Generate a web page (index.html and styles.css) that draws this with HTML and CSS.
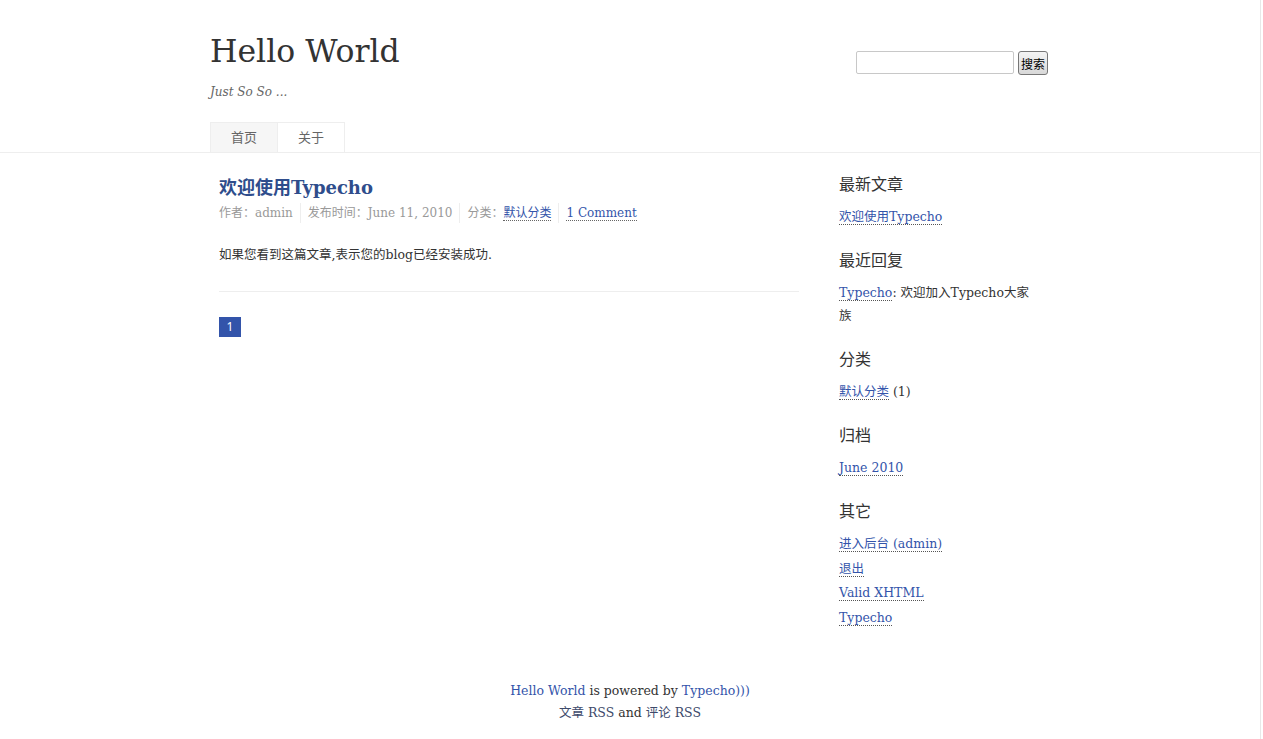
FILE: index.html
```html
<!DOCTYPE html>
<html lang="zh-CN">
<head>
    <meta charset="UTF-8">
    <title>Hello World</title>
    <link rel="stylesheet" href="styles.css">
</head>
<body>
<div class="sitio">
    <div class="cabecera">
        <div class="contenedor cabecera-fila">
            <div class="logo">
                <h1><a href="#">Hello World</a></h1>
                <p class="descripcion">Just So So ...</p>
            </div>
            <form class="buscar">
                <input type="text" class="buscar-texto">
                <button type="button" class="buscar-boton">搜索</button>
            </form>
        </div>
        <div class="contenedor">
            <ul class="menu">
                <li class="actual"><a href="#">首页</a></li>
                <li><a href="#">关于</a></li>
            </ul>
        </div>
    </div>

    <div class="contenedor cuerpo">
        <div class="contenido">
            <div class="entrada">
                <h2 class="entrada-titulo"><a href="#">欢迎使用Typecho</a></h2>
                <ul class="entrada-meta">
                    <li>作者：admin</li>
                    <li>发布时间：June 11, 2010</li>
                    <li>分类：<a href="#">默认分类</a></li>
                    <li><a href="#">1 Comment</a></li>
                </ul>
                <div class="entrada-texto">
                    <p>如果您看到这篇文章,表示您的blog已经安装成功.</p>
                </div>
            </div>
            <ol class="paginas">
                <li class="actual"><a href="#">1</a></li>
            </ol>
        </div>

        <div class="lateral">
            <div class="bloque">
                <h3>最新文章</h3>
                <ul>
                    <li><a href="#">欢迎使用Typecho</a></li>
                </ul>
            </div>
            <div class="bloque">
                <h3>最近回复</h3>
                <ul>
                    <li><a href="#">Typecho</a>: 欢迎加入Typecho大家族</li>
                </ul>
            </div>
            <div class="bloque">
                <h3>分类</h3>
                <ul>
                    <li><a href="#">默认分类</a> (1)</li>
                </ul>
            </div>
            <div class="bloque">
                <h3>归档</h3>
                <ul>
                    <li><a href="#">June 2010</a></li>
                </ul>
            </div>
            <div class="bloque">
                <h3>其它</h3>
                <ul>
                    <li><a href="#">进入后台 (admin)</a></li>
                    <li><a href="#">退出</a></li>
                    <li><a href="#">Valid XHTML</a></li>
                    <li><a href="#">Typecho</a></li>
                </ul>
            </div>
        </div>
    </div>

    <div class="pie">
        <a href="#">Hello World</a> is powered by <a href="#">Typecho)))</a><br>
        <a href="#" class="rss">文章 RSS</a> and <a href="#" class="rss">评论 RSS</a>
    </div>
</div>
</body>
</html>
```

FILE: styles.css
```css
body{
    margin: 0;
    padding: 0;
    font-family: "DejaVu Serif", "Noto Sans CJK SC", serif;
    font-size: 12.5px;
    color: #444;
    background: #fff;
}
a{
    color: #3354aa;
    text-decoration: none;
}
ul, ol{
    list-style: none;
    margin: 0;
    padding: 0;
}
.sitio{
    width: 1260px;
    min-height: 739px;
    border-right: 1px solid #e8e8e8;
}
.contenedor{
    width: 840px;
    margin: 0 auto;
}

/* cabecera */
.cabecera{
    border-bottom: 1px solid #eee;
}
.cabecera-fila{
    display: flex;
    justify-content: space-between;
}
.logo{
    padding-top: 30px;
}
.logo h1{
    margin: 0;
    font-weight: normal;
    font-size: 31.5px;
    line-height: 42px;
}
.logo h1 a{
    color: #333;
}
.descripcion{
    margin: 10px 0 0 0;
    font-style: italic;
    color: #666;
    font-size: 12px;
    line-height: 20px;
}
.buscar{
    display: flex;
    align-items: center;
    gap: 4px;
    margin: 50px 2px 0 0;
    height: 25px;
}
.buscar-texto{
    width: 152px;
    height: 19px;
    margin: 0;
    padding: 1px 2px;
    border: 1px solid #c8c8c8;
    border-radius: 2px;
}
.buscar-boton{
    height: 24px;
    margin: 1px 0 0 0;
    padding: 0 2px;
    font-family: "Noto Sans CJK SC", sans-serif;
    font-size: 12px;
    color: #000;
    border: 1px solid #777;
    border-radius: 3px;
    background: linear-gradient(#f4f4f4, #d8d8d8);
}
.menu{
    display: flex;
    margin-top: 20px;
}
.menu li{
    border: 1px solid #eee;
    border-bottom: 0;
    border-left: 0;
}
.menu li:first-child{
    border-left: 1px solid #eee;
}
.menu a{
    display: block;
    padding: 0 20px;
    line-height: 29px;
    font-size: 13px;
    color: #666;
    background: #fff;
}
.menu .actual a{
    background: #f6f6f6;
}

/* cuerpo */
.cuerpo{
    display: flex;
}
.contenido{
    width: 580px;
    margin-left: 9px;
    padding-top: 22px;
}
.entrada{
    border-bottom: 1px solid #eee;
    padding-bottom: 25px;
}
.entrada-titulo{
    margin: 0;
    font-size: 18px;
    line-height: 26px;
}
.entrada-titulo a{
    color: #2f4d8c;
}
.entrada-meta{
    display: flex;
    margin-top: 2px;
    font-size: 12px;
    line-height: 20px;
    color: #999;
}
.entrada-meta li{
    margin-right: 7px;
    padding-left: 7px;
    border-left: 1px solid #eee;
}
.entrada-meta li:first-child{
    padding-left: 0;
    border-left: 0;
}
.entrada-meta a{
    border-bottom: 1px dotted #666;
}
.entrada-texto p{
    margin: 21px 0 0 0;
    line-height: 22px;
    color: #333;
}
.paginas{
    display: flex;
    margin-top: 25px;
}
.paginas a{
    display: block;
    width: 22px;
    height: 20px;
    line-height: 20px;
    text-align: center;
    font-family: "Noto Sans", sans-serif;
    font-size: 12px;
}
.paginas .actual a{
    color: #fff;
    background: #3354aa;
}

/* lateral */
.lateral{
    width: 200px;
    margin-left: 40px;
    padding-top: 20px;
}
.bloque{
    margin-bottom: 21px;
}
.bloque h3{
    margin: 0 0 8px 0;
    font-size: 16px;
    font-weight: normal;
    line-height: 24px;
    color: #333;
}
.bloque li{
    line-height: 23px;
    margin-bottom: 1.5px;
    color: #333;
}
.bloque a{
    border-bottom: 1px dotted #555;
}

/* pie */
.pie{
    margin-top: 30px;
    padding-bottom: 16px;
    text-align: center;
    line-height: 22px;
    color: #333;
}
.pie .rss{
    color: #3d4a6b;
}
```
